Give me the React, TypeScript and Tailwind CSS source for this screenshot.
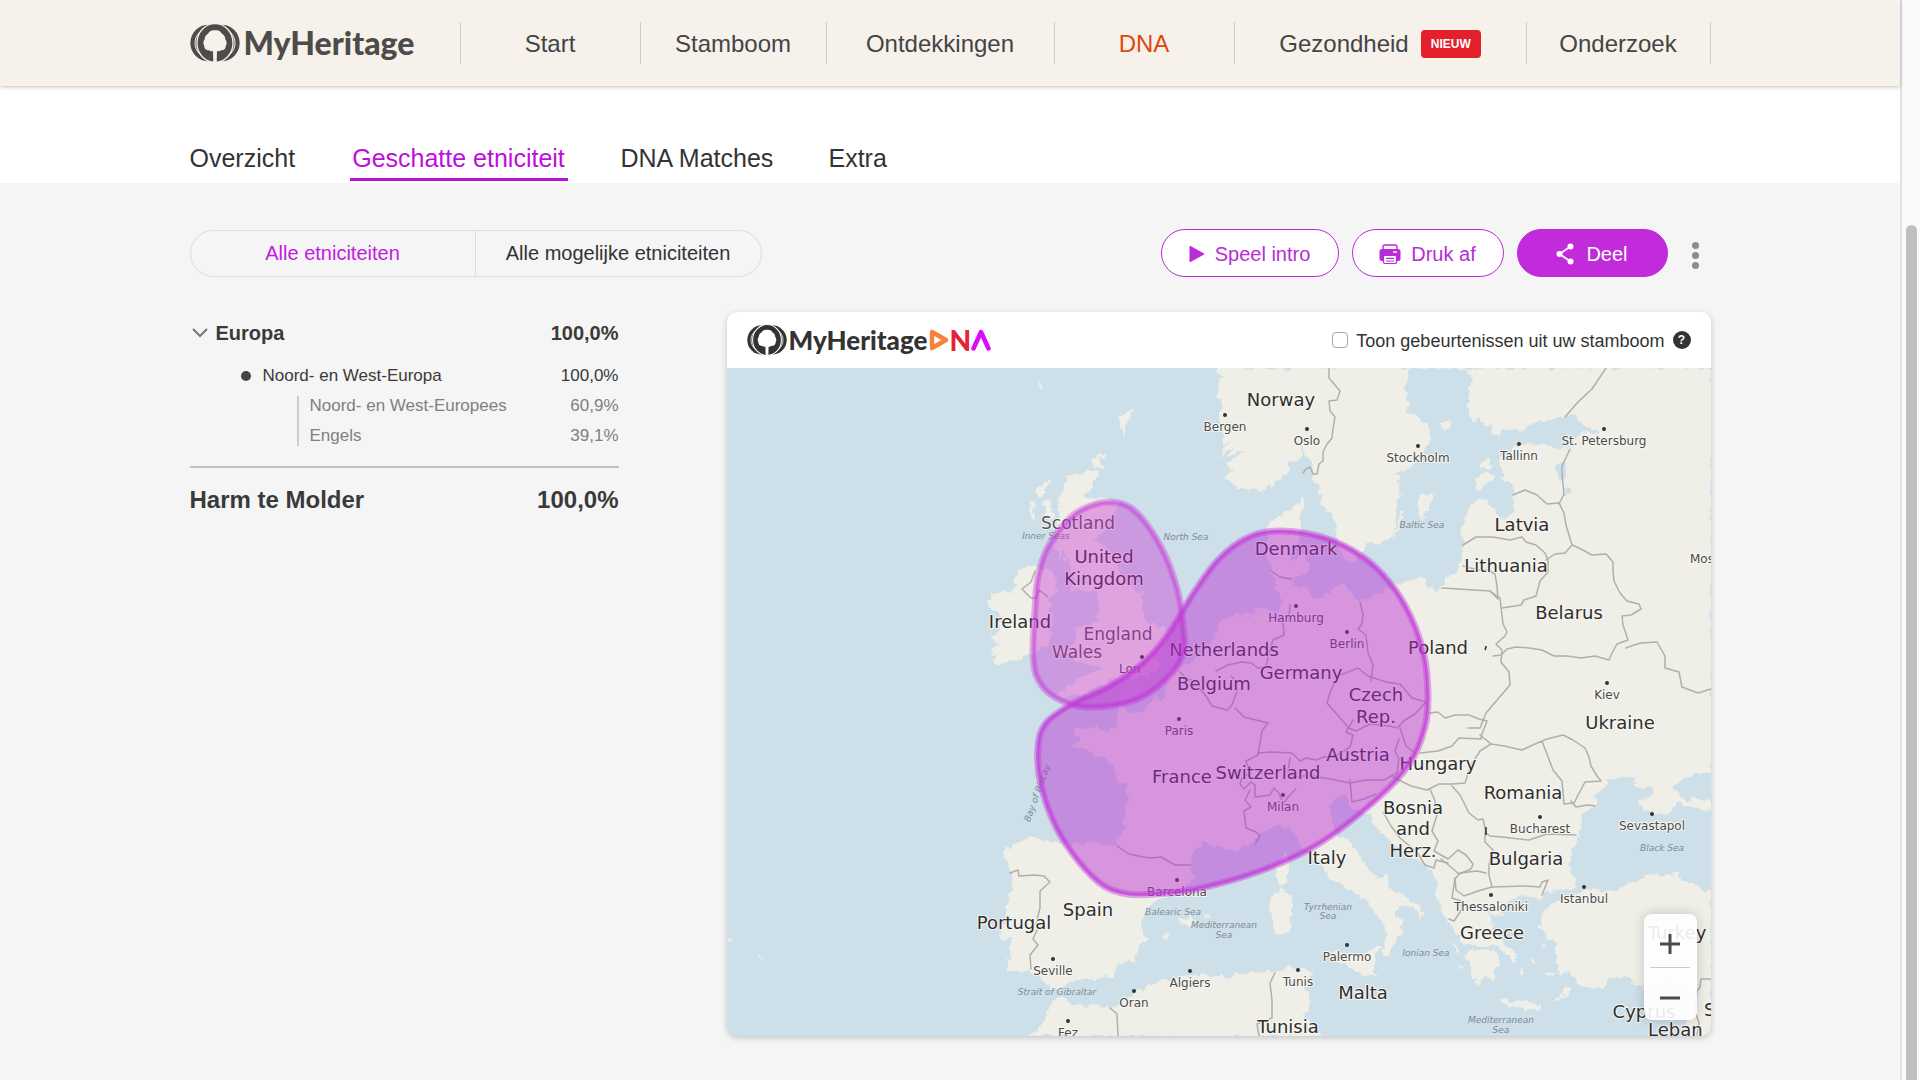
import React, { useState } from "react";

type Pt = [number, number];

/* ---------- geometry helpers ---------- */

function parse(s: string): Pt[] {
  return s
    .trim()
    .split(/\s+/)
    .map((p) => p.split(",").map(Number) as Pt);
}

// Closed Catmull-Rom curve through the points
function smooth(s: string): string {
  const p = parse(s);
  const n = p.length;
  let d = `M${p[0][0]} ${p[0][1]}`;
  for (let i = 0; i < n; i++) {
    const a = p[(i + n - 1) % n];
    const b = p[i];
    const c = p[(i + 1) % n];
    const e = p[(i + 2) % n];
    d += `C${b[0] + (c[0] - a[0]) / 6} ${b[1] + (c[1] - a[1]) / 6} ${c[0] - (e[0] - b[0]) / 6} ${c[1] - (e[1] - b[1]) / 6} ${c[0]} ${c[1]}`;
  }
  return d + "Z";
}

/* ---------- map data ---------- */

const LAND = [
  // continental Europe
  "1220,368 1219,375 1229,374 1221,378 1219,382 1221,392 1217,398 1221,399 1221,410 1220,420 1224,430 1222,438 1223,445 1234,439 1223,449 1222,457 1228,450 1236,447 1227,456 1240,452 1247,452 1238,456 1229,463 1227,470 1236,467 1228,473 1228,478 1234,485 1248,490 1263,490 1275,482 1285,472 1290,461 1297,464 1301,456 1302,446 1305,446 1306,456 1312,460 1314,470 1314,480 1319,490 1321,500 1327,509 1334,518 1338,530 1336,543 1342,555 1352,563 1358,556 1365,545 1383,542 1393,533 1396,513 1399,493 1398,483 1400,476 1391,474 1398,472 1410,468 1417,460 1425,448 1432,440 1430,432 1425,423 1417,415 1407,412 1406,393 1405,383 1408,377 1408,368 1467,368 1472,380 1470,393 1469,408 1468,415 1475,421 1481,418 1484,425 1493,424 1490,432 1496,435 1508,430 1520,430 1532,424 1540,421 1553,418 1563,417 1577,413 1578,422 1593,427 1602,434 1590,434 1583,432 1578,436 1573,441 1571,449 1560,449 1550,447 1530,445 1513,448 1500,457 1501,467 1504,477 1510,483 1515,483 1513,497 1514,510 1507,519 1498,517 1493,507 1487,499 1473,503 1467,515 1463,525 1463,550 1461,563 1456,573 1447,578 1445,587 1433,591 1427,587 1425,579 1407,581 1393,586 1377,596 1360,602 1350,593 1343,583 1336,588 1328,592 1320,600 1311,594 1307,588 1298,590 1292,582 1297,573 1289,563 1291,552 1300,545 1297,535 1301,527 1299,515 1303,510 1303,499 1292,509 1282,516 1272,521 1269,530 1266,545 1268,558 1273,573 1277,590 1283,603 1275,613 1265,608 1253,608 1252,617 1240,615 1227,618 1218,627 1214,640 1200,653 1187,665 1170,672 1168,687 1162,697 1157,700 1148,705 1145,714 1127,713 1122,704 1116,707 1119,718 1120,730 1103,732 1097,727 1083,728 1073,732 1079,738 1073,745 1090,750 1107,760 1115,770 1117,778 1127,785 1128,800 1126,813 1122,837 1113,845 1090,843 1067,845 1047,842 1030,838 1018,843 1005,850 1008,862 1012,877 1010,897 1005,917 1000,938 1010,938 1010,947 1008,970 1030,972 1043,977 1050,989 1060,987 1077,978 1112,977 1118,963 1132,960 1137,948 1147,938 1140,927 1147,910 1157,900 1180,890 1193,877 1190,863 1193,850 1205,842 1220,848 1237,850 1253,842 1263,832 1277,824 1293,830 1302,845 1317,860 1330,877 1350,888 1363,898 1373,907 1383,920 1388,937 1382,952 1387,955 1395,940 1403,932 1402,923 1395,913 1400,903 1412,907 1423,917 1422,908 1402,895 1385,887 1388,878 1373,875 1362,860 1350,842 1335,833 1330,815 1329,802 1347,795 1352,807 1363,812 1370,813 1373,823 1385,837 1403,850 1422,862 1433,872 1438,882 1438,897 1445,917 1455,928 1458,940 1466,946 1480,945 1500,947 1508,956 1517,963 1512,952 1502,940 1493,930 1490,920 1484,908 1497,917 1503,913 1502,906 1510,898 1530,896 1540,900 1543,893 1560,890 1577,887 1572,877 1568,863 1572,850 1578,840 1582,813 1593,807 1595,797 1610,780 1623,777 1637,777 1635,785 1653,788 1653,795 1638,802 1653,813 1667,813 1677,803 1693,807 1711,810 1711,800 1685,800 1677,797 1673,787 1683,778 1711,770 1711,368",
  // Anatolia
  "1542,917 1547,907 1560,900 1580,892 1597,890 1617,892 1630,883 1647,875 1677,875 1690,883 1711,892 1711,1036 1683,1036 1687,1017 1690,1000 1683,990 1665,984 1650,992 1643,990 1627,978 1608,977 1603,987 1583,985 1570,973 1557,973 1560,963 1553,953 1557,945 1548,937 1542,923",
  // Great Britain
  "1068,475 1098,473 1093,487 1083,497 1100,499 1114,500 1117,507 1110,520 1103,533 1093,542 1103,547 1113,553 1120,573 1128,587 1142,593 1142,607 1147,623 1156,627 1167,628 1167,643 1153,657 1163,665 1147,675 1113,680 1093,688 1070,697 1058,697 1077,680 1103,667 1080,663 1062,653 1077,640 1077,627 1097,623 1100,603 1097,590 1073,590 1074,578 1067,562 1064,548 1060,560 1056,545 1060,535 1055,530 1060,517 1058,503 1063,490",
  // Ireland
  "1035,565 1050,573 1058,590 1047,600 1052,623 1048,645 1030,653 1015,660 997,663 992,660 999,655 988,652 1003,643 990,639 997,633 1002,618 995,610 988,607 992,593 1010,593 1018,585 1012,581 1023,570",
  // Jutland's neighbours, Gotland and the Baltic islands
  "1290,562 1300,556 1310,562 1308,573 1298,577 1291,571",
  "1420,505 1421,497 1430,495 1436,492 1430,503 1426,512 1422,519",
  "1402,510 1396,530 1393,540 1397,533",
  "1476,478 1485,473 1497,478 1485,484 1479,492",
  "1480,465 1489,460 1492,467 1486,471",
  "1440,425 1448,420 1451,426 1445,430",
  // Peloponnese, Crete and Aegean islands
  "1465,955 1475,950 1487,949 1497,955 1500,965 1492,968 1494,982 1485,975 1478,985 1470,970",
  "1502,998 1510,1001 1527,1002 1542,1007 1534,1010 1515,1006 1503,1004",
  "1503,945 1510,948 1518,957 1513,956",
  "1556,1001 1567,988 1571,987 1563,997",
  "1537,927 1543,926 1545,930 1539,931",
  "1540,944 1546,947 1543,950",
  "1520,968 1524,971 1521,975",
  "1530,958 1534,960 1531,962",
  "1547,972 1553,973 1549,976",
  "1459,964 1463,968 1461,971",
  "1453,943 1460,951 1457,952",
  // Sicily, Sardinia, Corsica, Balearics
  "1330,957 1338,951 1355,955 1380,947 1373,963 1375,977 1363,975 1343,963",
  "1270,897 1283,889 1292,898 1290,930 1277,936 1275,925 1272,923",
  "1275,870 1287,853 1288,873 1283,886",
  "1180,923 1190,916 1197,923 1189,927",
  "1203,914 1210,916 1206,917",
  "1163,936 1168,932 1166,940",
  // North Africa
  "1030,1036 1043,1023 1055,997 1065,998 1070,1003 1093,1007 1113,1007 1127,999 1137,992 1157,983 1193,975 1227,978 1243,973 1270,973 1290,967 1300,970 1312,975 1303,987 1312,1003 1303,1018 1320,1036",
  // Scottish isles
  "1037,490 1047,479 1050,482 1043,495 1038,497",
  "1043,503 1050,502 1051,512 1056,516 1047,517",
  "1120,420 1129,408 1132,409 1127,423 1124,435 1122,424",
  "1093,459 1099,458 1101,467 1096,468",
  "1098,455 1103,454 1107,455 1102,457",
  "1031,501 1034,502 1033,520 1031,512",
  "1038,382 1043,386 1041,389",
  "728,939 732,940 729,942",
  "758,956 763,957 760,959",
];

const LAKES = ["1554,465 1560,462 1565,464 1566,477 1561,483 1557,472", "1564,487 1569,488 1571,494 1567,495"];

const BORDERS = [
  "M1329 368l0 10 11 13-3 9-8 1 1 10 5 6-2 12-1 9-5 6-4 8 0 9-4 3-2 10-4 0-3-7-4 2-3 4",
  "M1606 368l-14 21-14 13-13 15",
  "M1570 449l-8 17 0 8 2 20-5 10",
  "M1513 495l12-5 12 5 10 9 12-1 5 10 2 12 6 20-7 8-10 1-9 6",
  "M1463 545l13-8 17 0 17 3 12-3 4 5 10 3 9 8 3 7 0 12-8 9-4 15-12 4-3 5-19 3",
  "M1442 588l48 3 8 8-1-13-2-12-7-4-10 0-15-4",
  "M1490 591l10 7 3 26 4 8-2 4-9 8 6 6-1 12 8 10 1 13-24 28-6 15-12 0",
  "M1572 545l7 3 13 7 14-1 7 8 0 9 1 10 6 12 7 8 12 3 2 5-10 6-9 1 1 9 5 15-11 4-6 11-2 5-14-4-14 2-14-2-13 0-12-6-13-2-13-1-9 2-6 6-8 1",
  "M1626 648l8-3 7-2 16-1 8 14 0 12 14 4 3 15 16 6 13-4",
  "M1430 713l8-1 7 6 10-3 14 0 10 4 8 2-5 13-1 5-22-1-7 8-14 5-18 2",
  "M1480 735l11 9 13 2 18 4 13-6 12-5 16-4 10 5 12 8 4 9 2 9 6 10 4 5-16 1-11 21-10 1-2-23-9-11-11-29",
  "M1571 801l5 6 12-2 7 1",
  "M1491 744l-11 7-9 14-6 18-13 1-13 0-12 6-16-4-18-9",
  "M1452 786l8 9 9 18 9 7 5-1 3 14 4 3 12 1 27 3 18-6 29 1",
  "M1485 832l0 10 8 8-4 14 0 11 3 12 33-1 15 1 2-5 6-2-6 15",
  "M1492 887l-14 4-14 5-8-6-1-11 5-6 17-2 9 2",
  "M1430 789l5 12 2 14-5 16 6 10-4 10 14 8 10-9 8 5 7 9-2 5-12 5-8-7-10-8",
  "M1383 812l8 14 9 12 17 14 8 13 9 3 2-8 12 3",
  "M1455 878l-3 20 9 3 1 8-8 12-5-2",
  "M1290 605l-1 16-6 0 1 14-11 5-4 13-3 14-8 1-7-5-10-1-13 3-12 6",
  "M1180 672l7 7 9 2 4 8 6 7 6 10 15 4 5-5 5-14 0-9-6-6",
  "M1235 708l9 9 24 6-6 8-4 24-12 6 4 12-8 5-2 6 4 5 7-7 4 3 0 12 15-2 4-7 5 5 4 11 6-8 7-7",
  "M1258 753l14-1 20 1 8 8 6-3 10 2 8-3 12-1 14-9 3-12-7-3 7-12",
  "M1290 758l-2 14 8 5 6-1 10 0 18 3 20 4 16-3 18 0 13-7 2-14-4-8 4-12",
  "M1250 790l-5 10 6 7-7 4 2 17 10 4 4 4-5 8",
  "M1331 690l-4 13 22 25 7 3 14-7 20 2 7 2 8-8 10-6 11-12-14-4-12-14-14-2-18-6-10-8-20 8z",
  "M1360 602l3 12-1 10-4 5 8 6 2 18 5 12-2 16",
  "M1400 728l6 18 9 7",
  "M1350 780l2 22 12-3 12-5",
  "M1117 846l12 8 14 3 8 1 10-1 14 8 8 0 8 0",
  "M1010 873l8-3 1 6 16-1 9 1 6 6-10 9 0 17-4 16 2 4-5 11 5 6-8 10 1 14",
  "M1275 973l-5 10 2 17 0 18-15 6 2 12",
  "M1110 1008l7 6 1 22",
  "M1035 571l-4 11-9 7 9 9 5 0 3-8 9 7",
  "M1271 571l9 6 12 2",
  "M1711 979l-10 0-1 8-3 4-2 20 4 12-2 12",
];

type Label = { x: number; y: number; t: string };

const COUNTRIES: Label[] = [
  { x: 1281, y: 406, t: "Norway" },
  { x: 1104, y: 563, t: "United" },
  { x: 1104, y: 585, t: "Kingdom" },
  { x: 1020, y: 628, t: "Ireland" },
  { x: 1296, y: 555, t: "Denmark" },
  { x: 1224, y: 656, t: "Netherlands" },
  { x: 1214, y: 690, t: "Belgium" },
  { x: 1301, y: 679, t: "Germany" },
  { x: 1522, y: 531, t: "Latvia" },
  { x: 1506, y: 572, t: "Lithuania" },
  { x: 1569, y: 619, t: "Belarus" },
  { x: 1438, y: 654, t: "Poland" },
  { x: 1376, y: 701, t: "Czech" },
  { x: 1376, y: 723, t: "Rep." },
  { x: 1620, y: 729, t: "Ukraine" },
  { x: 1358, y: 761, t: "Austria" },
  { x: 1438, y: 770, t: "Hungary" },
  { x: 1182, y: 783, t: "France" },
  { x: 1268, y: 779, t: "Switzerland" },
  { x: 1523, y: 799, t: "Romania" },
  { x: 1413, y: 814, t: "Bosnia" },
  { x: 1413, y: 835, t: "and" },
  { x: 1413, y: 857, t: "Herz." },
  { x: 1327, y: 864, t: "Italy" },
  { x: 1526, y: 865, t: "Bulgaria" },
  { x: 1088, y: 916, t: "Spain" },
  { x: 1014, y: 929, t: "Portugal" },
  { x: 1492, y: 939, t: "Greece" },
  { x: 1677, y: 939, t: "Turkey" },
  { x: 1363, y: 999, t: "Malta" },
  { x: 1644, y: 1018, t: "Cyprus" },
  { x: 1288, y: 1033, t: "Tunisia" },
];

const REGIONS: Label[] = [
  { x: 1078, y: 529, t: "Scotland" },
  { x: 1118, y: 640, t: "England" },
  { x: 1077, y: 658, t: "Wales" },
];

const CITIES: Label[] = [
  { x: 1225, y: 431, t: "Bergen" },
  { x: 1307, y: 445, t: "Oslo" },
  { x: 1418, y: 462, t: "Stockholm" },
  { x: 1519, y: 460, t: "Tallinn" },
  { x: 1604, y: 445, t: "St. Petersburg" },
  { x: 1296, y: 622, t: "Hamburg" },
  { x: 1347, y: 648, t: "Berlin" },
  { x: 1607, y: 699, t: "Kiev" },
  { x: 1179, y: 735, t: "Paris" },
  { x: 1283, y: 811, t: "Milan" },
  { x: 1540, y: 833, t: "Bucharest" },
  { x: 1652, y: 830, t: "Sevastapol" },
  { x: 1177, y: 896, t: "Barcelona" },
  { x: 1584, y: 903, t: "Istanbul" },
  { x: 1491, y: 911, t: "Thessaloniki" },
  { x: 1347, y: 961, t: "Palermo" },
  { x: 1053, y: 975, t: "Seville" },
  { x: 1190, y: 987, t: "Algiers" },
  { x: 1298, y: 986, t: "Tunis" },
  { x: 1134, y: 1007, t: "Oran" },
  { x: 1068, y: 1037, t: "Fez" },
];

const SEAS: Label[] = [
  { x: 1046, y: 539, t: "Inner Seas" },
  { x: 1186, y: 540, t: "North Sea" },
  { x: 1422, y: 528, t: "Baltic Sea" },
  { x: 1173, y: 915, t: "Balearic Sea" },
  { x: 1224, y: 928, t: "Mediterranean" },
  { x: 1224, y: 938, t: "Sea" },
  { x: 1328, y: 910, t: "Tyrrhenian" },
  { x: 1328, y: 919, t: "Sea" },
  { x: 1426, y: 956, t: "Ionian Sea" },
  { x: 1662, y: 851, t: "Black Sea" },
  { x: 1057, y: 995, t: "Strait of Gibraltar" },
  { x: 1501, y: 1023, t: "Mediterranean" },
  { x: 1501, y: 1033, t: "Sea" },
];

const BLOB_UK = smooth(
  "1112,502 1131,508 1148,526 1165,555 1178,592 1183,625 1184,650 1172,673 1142,697 1110,706 1078,706 1050,694 1036,675 1033,650 1035,610 1038,577 1048,547 1070,518 1090,506"
);
const BLOB_NW = smooth(
  "1280,531 1247,538 1218,560 1193,594 1167,636 1143,663 1110,686 1072,704 1046,723 1038,747 1041,785 1056,827 1079,862 1104,886 1128,894 1155,894 1197,889 1263,870 1320,843 1377,799 1410,763 1425,727 1428,695 1424,655 1410,615 1390,583 1363,557 1325,538"
);

function EthnicityMap() {
  return (
    <svg
      viewBox="727 368 984 668"
      className="block w-full bg-[#cddfe9]"
      role="img"
      aria-label="Kaart van Europa"
      fontFamily='"DejaVu Sans", sans-serif'
      textAnchor="middle"
    >
      <defs>
        <filter id="coast" x="0" y="0" width="1" height="1" colorInterpolationFilters="sRGB">
          <feTurbulence type="fractalNoise" baseFrequency="0.12" numOctaves="3" seed="4" result="n" />
          <feDisplacementMap in="SourceGraphic" in2="n" scale="10" xChannelSelector="R" yChannelSelector="G" />
        </filter>
      </defs>
      <g filter="url(#coast)">
        <rect x="700" y="340" width="1040" height="720" fill="#cddfe9" />
        <g fill="#f0efe7" stroke="#f0efe7" strokeWidth="1" strokeLinejoin="round">
          {LAND.map((p, i) => (
            <polygon key={i} points={p} />
          ))}
        </g>
        <g fill="#cddfe9">
          {LAKES.map((p, i) => (
            <polygon key={i} points={p} />
          ))}
        </g>
      </g>
      <g fill="none" stroke="#b0afaa" strokeWidth="1.5" strokeLinejoin="round" strokeLinecap="round">
        {BORDERS.map((d, i) => (
          <path key={i} d={d} />
        ))}
      </g>

      <g fontSize="9" fontStyle="italic" fill="#7f8b93">
        {SEAS.map((l, i) => (
          <text key={i} x={l.x} y={l.y}>
            {l.t}
          </text>
        ))}
        <text transform="translate(1040 794) rotate(-70)">Bay of Biscay</text>
      </g>
      <g fontSize="12" fill="#4a4a4a" stroke="#f7f7f2" strokeWidth="2" strokeLinejoin="round" paintOrder="stroke">
        {CITIES.map((l, i) => (
          <g key={i}>
            <circle cx={l.x} cy={l.y - 16} r="2" fill="#333333" stroke="none" />
            <text x={l.x} y={l.y}>
              {l.t}
            </text>
          </g>
        ))}
        <circle cx="1142" cy="657" r="2" fill="#333333" stroke="none" />
        <text x="1119" y="673" textAnchor="start">
          Lon
        </text>
        <text x="1690" y="563" textAnchor="start">
          Mos
        </text>
      </g>
      <g fontSize="17" fill="#555555" stroke="#f7f7f2" strokeWidth="2" strokeLinejoin="round" paintOrder="stroke">
        {REGIONS.map((l, i) => (
          <text key={i} x={l.x} y={l.y}>
            {l.t}
          </text>
        ))}
      </g>
      <g fontSize="18" fill="#2e2e2e" stroke="#f7f7f2" strokeWidth="2" strokeLinejoin="round" paintOrder="stroke">
        {COUNTRIES.map((l, i) => (
          <text key={i} x={l.x} y={l.y}>
            {l.t}
          </text>
        ))}
        <text x="1648" y="1036" textAnchor="start">
          Leban
        </text>
        <text x="1704" y="1016" textAnchor="start">
          S
        </text>
      </g>
      <path d="M1485 647l1 0-1 3M1486 827l0 8" fill="none" stroke="#2e2e2e" strokeWidth="1.5" />

      <path d={BLOB_UK} fill="#c428d2" fillOpacity="0.38" stroke="#c43ad6" strokeOpacity="0.36" strokeWidth="7" />
      <path d={BLOB_UK} fill="none" stroke="#c43ad8" strokeOpacity="0.38" strokeWidth="3" />
      <path d={BLOB_NW} fill="#b829d3" fillOpacity="0.45" stroke="#c43ad6" strokeOpacity="0.42" strokeWidth="7" />
      <path d={BLOB_NW} fill="none" stroke="#c03ad9" strokeOpacity="0.6" strokeWidth="3" />
    </svg>
  );
}

/* ---------- logo ---------- */

function Emblem({ className, back }: { className: string; back: string }) {
  return (
    <svg viewBox="0 0 150 114" className={className} aria-hidden="true">
      <g fill="currentColor">
        <circle cx="56" cy="57" r="55" />
        <circle cx="94" cy="57" r="55" />
      </g>
      <g fill="none" stroke={back} strokeWidth="3">
        <path d="M62 6C36 12 15 32 15 57s20 45 47 51" />
        <path d="M88 6c26 6 47 26 47 51s-20 45-47 51" />
      </g>
      <ellipse cx="75" cy="57" rx="54" ry="58" fill="currentColor" stroke={back} strokeWidth="4" />
      <path
        d="M75 19c10-2 18 4 21 10 7 3 10 11 10 17 5 6 5 14 1 20 1 8-6 14-13 13-5 3-10 4-13 2l-1 36H70l-1-36c-3 2-8 1-13-2-7 1-14-5-13-13-4-6-4-14 1-20 0-6 3-14 10-17 3-6 11-12 21-10z"
        fill={back}
      />
    </svg>
  );
}

/* ---------- page parts ---------- */

const NAV = ["Start", "Stamboom", "Ontdekkingen", "DNA", "Gezondheid", "Onderzoek"];

function Header() {
  return (
    <header className="relative bg-[#f6f1ea] shadow-[0_1px_4px_rgba(0,0,0,0.25)]">
      <div className="mx-auto flex h-[86px] max-w-[1521px] items-center">
        <a href="#home" className="flex w-[270px] shrink-0 items-center gap-1 text-[#4d4c4a]" aria-label="MyHeritage">
          <Emblem className="h-[38px] w-[50px]" back="#f6f1ea" />
          <span className="font-[Lato] text-[32px] leading-10 font-black">MyHeritage</span>
        </a>
        <nav className="grid flex-1 grid-cols-[180fr_186fr_228fr_180fr_292fr_184fr] border-l border-[#cfcdc8]">
          {NAV.map((item) => (
            <a
              key={item}
              href={"#" + item.toLowerCase()}
              className={
                "flex h-[42px] items-center justify-center gap-3 border-r border-[#cfcdc8] pt-0.5 text-2xl " +
                (item === "DNA" ? "text-[#e0480b]" : "text-[#444444]")
              }
            >
              {item}
              {item === "Gezondheid" && (
                <span className="flex h-7 w-[60px] items-center justify-center rounded bg-[#e5202d] text-xs font-bold text-white">
                  NIEUW
                </span>
              )}
            </a>
          ))}
        </nav>
      </div>
    </header>
  );
}

function SubNav() {
  const tab = "flex h-[42px] items-center border-b-[3px] ";
  return (
    <div className="bg-white pt-[53px] pb-0.5">
      <nav className="mx-auto flex max-w-[1521px] gap-[53px] text-[25px] text-[#333333]">
        <a href="#overzicht" className={tab + "w-[107px] border-transparent"}>
          Overzicht
        </a>
        <a href="#etniciteit" className={tab + "w-[218px] justify-center border-[#bd0edb] whitespace-nowrap text-[#bd0edb]"}>
          Geschatte etniciteit
        </a>
        <a href="#matches" className={tab + "w-[155px] border-transparent whitespace-nowrap"}>
          DNA Matches
        </a>
        <a href="#extra" className={tab + "border-transparent"}>
          Extra
        </a>
      </nav>
    </div>
  );
}

function Toolbar() {
  const pill = "flex h-12 items-center justify-center rounded-full border border-[#b92bd6] pt-0.5 text-xl ";
  return (
    <div className="flex items-center justify-between">
      <div className="grid h-[47px] w-[572px] grid-cols-2 rounded-full border border-[#dedede] text-xl">
        <button type="button" className="border-r border-[#dedede] text-[#c21be0]">
          Alle etniciteiten
        </button>
        <button type="button" className="text-[#333333]">
          Alle mogelijke etniciteiten
        </button>
      </div>
      <div className="flex items-center gap-[13px]">
        <button type="button" className={pill + "w-[178px] gap-2.5 bg-white text-[#b92bd6]"}>
          <svg viewBox="0 0 16 18" className="h-[18px] w-4" fill="currentColor" aria-hidden="true">
            <path d="M1 1.2 15 9 1 16.8z" stroke="currentColor" strokeLinejoin="round" />
          </svg>
          Speel intro
        </button>
        <button type="button" className={pill + "w-[152px] gap-2.5 bg-white text-[#b92bd6]"}>
          <svg viewBox="0 0 22 20" className="h-5 w-[22px]" aria-hidden="true">
            <path d="M4 5V2.5A1.5 1.5 0 0 1 5.500 1h11A1.500 1.500 0 0 1 18 2.500V5" fill="none" stroke="currentColor" strokeWidth="1.400" />
            <rect x="0.500" y="5" width="21" height="12" rx="2.500" fill="currentColor" />
            <rect x="4.500" y="11.500" width="13" height="8" rx="1.500" fill="white" stroke="currentColor" strokeWidth="1.200" />
            <path d="M7 14.300h8M7 17h8" stroke="currentColor" strokeWidth="1.200" />
            <path d="M14 8h4" stroke="white" strokeWidth="1.400" />
          </svg>
          Druk af
        </button>
        <button type="button" className={pill + "w-[151px] gap-3 bg-[#c22bdb] text-white"}>
          <svg viewBox="0 0 18 22" className="h-[22px] w-[18px]" fill="currentColor" aria-hidden="true">
            <path d="M14.500 3.500 3.500 11l11 7.500" fill="none" stroke="currentColor" strokeWidth="1.800" />
            <circle cx="14.500" cy="3.500" r="3" />
            <circle cx="3.500" cy="11" r="3" />
            <circle cx="14.500" cy="18.500" r="3" />
          </svg>
          Deel
        </button>
        <button type="button" aria-label="Meer" className="flex w-[30px] flex-col items-center gap-[3px] pt-1">
          <span className="size-[7px] rounded-full bg-[#8c8c8c]" />
          <span className="size-[7px] rounded-full bg-[#8c8c8c]" />
          <span className="size-[7px] rounded-full bg-[#8c8c8c]" />
        </button>
      </div>
    </div>
  );
}

function EthnicityList() {
  return (
    <section className="w-[429px] shrink-0 text-[#3a3a3a]">
      <button type="button" className="flex h-[42px] w-full items-center text-left text-xl font-bold">
        <svg viewBox="0 0 16 10" className="mr-2 ml-0.5 h-2.5 w-4" aria-hidden="true">
          <path d="M1 1l7 7 7-7" fill="none" stroke="#777777" strokeWidth="2" />
        </svg>
        Europa
        <span className="ml-auto">100,0%</span>
      </button>
      <div className="mt-2 flex h-7 items-center pl-[51px] text-[17px]">
        <span className="mr-3 size-2.5 rounded-full bg-[#444444]" />
        Noord- en West-Europa
        <span className="ml-auto">100,0%</span>
      </div>
      <ul className="mt-1.5 ml-[107px] h-[50px] border-l-2 border-[#cccccc] pl-[11px] text-[17px] text-[#808080]">
        <li className="flex h-5 items-center justify-between">
          Noord- en West-Europees <span>60,9%</span>
        </li>
        <li className="mt-2.5 flex h-5 items-center justify-between">
          Engels <span>39,1%</span>
        </li>
      </ul>
      <div className="mt-5 flex h-[66px] items-center justify-between border-t-2 border-[#bfbfbf] text-2xl font-bold">
        Harm te Molder <span>100,0%</span>
      </div>
    </section>
  );
}

function MapCard() {
  const [events, setEvents] = useState(false);
  return (
    <section className="relative flex-1 overflow-hidden rounded-[10px] bg-white shadow-[0_2px_6px_rgba(0,0,0,0.2)]">
      <div className="flex h-14 items-center justify-between pr-5 pl-5">
        <div className="flex items-center text-[#333333]">
          <Emblem className="mr-0.5 h-8 w-10" back="#ffffff" />
          <span className="font-[Lato] text-[26px] leading-8 font-black">MyHeritage</span>
          <span className="ml-0.5 flex items-center">
            <svg viewBox="0 0 20 22" className="h-[22px] w-5" aria-hidden="true">
              <path d="M3 3v16l14-8z" fill="none" stroke="#f9823b" strokeWidth="4.500" strokeLinejoin="round" />
            </svg>
            <span className="font-[Lato] text-[28px] leading-8 font-black text-[#e6213a]">N</span>
            <svg viewBox="0 0 20 22" className="h-[22px] w-5" aria-hidden="true">
              <path d="M2.500 19.500 10 3l7.500 16.500" fill="none" stroke="#d90dfb" strokeWidth="4.500" strokeLinecap="round" strokeLinejoin="round" />
            </svg>
          </span>
        </div>
        <div className="flex items-center text-lg text-[#333333]">
          <input
            id="events"
            type="checkbox"
            checked={events}
            onChange={(e) => setEvents(e.target.checked)}
            className="mr-2 size-4 appearance-none rounded border border-[#a8a8a8] bg-white checked:bg-[#c22bdb]"
          />
          <label htmlFor="events" className="pt-0.5">
            Toon gebeurtenissen uit uw stamboom
          </label>
          <button
            type="button"
            aria-label="Uitleg"
            className="ml-2 flex size-[18px] items-center justify-center rounded-full bg-[#333333] text-xs font-bold text-white"
          >
            ?
          </button>
        </div>
      </div>
      <EthnicityMap />
      <div className="absolute right-3.5 bottom-4 flex h-[106px] w-[53px] flex-col items-center rounded-lg bg-white/90 shadow-[0_0_12px_rgba(0,0,0,0.2)]">
        <button type="button" aria-label="Inzoomen" className="flex w-10 flex-1 items-center justify-center border-b border-[#cccccc]">
          <svg viewBox="0 0 20 20" className="mt-2 size-5" aria-hidden="true">
            <path d="M10 0v20M0 10h20" stroke="#4a4a4a" strokeWidth="3" />
          </svg>
        </button>
        <button type="button" aria-label="Uitzoomen" className="flex w-10 flex-1 items-center justify-center">
          <svg viewBox="0 0 20 20" className="mt-2 size-5" aria-hidden="true">
            <path d="M0 10h20" stroke="#4a4a4a" strokeWidth="3" />
          </svg>
        </button>
      </div>
    </section>
  );
}

export default function App() {
  return (
    <div className="flex min-h-screen bg-[#f5f5f5] font-['Liberation_Sans',Arial,sans-serif]">
      <div className="min-w-0 flex-1">
        <Header />
        <SubNav />
        <main className="mx-auto max-w-[1521px] pt-[46px] pb-11">
          <Toolbar />
          <div className="mt-[35px] flex items-start gap-[108px]">
            <EthnicityList />
            <MapCard />
          </div>
        </main>
      </div>
      <div className="flex w-5 shrink-0 flex-col items-center border-l-2 border-[#e2e2e2] bg-[#fafafa] pt-[225px]" aria-hidden="true">
        <div className="w-[11px] flex-1 rounded-t-full bg-[#bfbfbf]" />
      </div>
    </div>
  );
}
